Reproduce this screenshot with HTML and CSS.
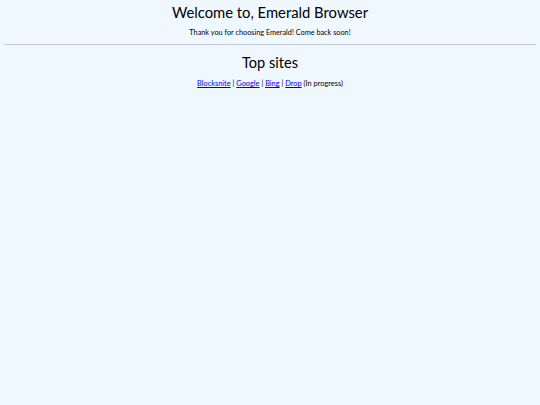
FILE: index.html
```html
<!DOCTYPE html>
<html>
<head>
<meta charset="utf-8">
<link rel="stylesheet" href="styles.css">
</head>
<body>
<header class="intro">
<h1 class="title">Welcome to, Emerald Browser</h1>
<p class="tagline">Thank you for choosing Emerald! Come back soon!</p>
</header>
<hr class="rule">
<section class="sites">
<h2 class="sites-title">Top sites</h2>
<p class="links"><a href="#">Blocksnite</a> | <a href="#">Google</a> | <a href="#">Bing</a> | <a href="#">Drop</a> (In progress)</p>
</section>
</body>
</html>
```
FILE: styles.css
```css
html, body {
  background: #f0f8ff;
}
body {
  margin: 4px;
  font-family: Lato, "Open Sans", sans-serif;
  color: #000;
  text-align: center;
}
.title {
  font-size: 14.8px;
  font-weight: 400;
  margin: 0;
  line-height: 16px;
}
.tagline {
  font-size: 7.3px;
  margin: 8px 0 0;
  line-height: 10px;
}
.rule {
  margin: 6px 0 0;
  border: 0;
  border-top: 1px solid #c4c8d4;
  height: 0;
}
.sites-title {
  font-size: 14.6px;
  font-weight: 400;
  margin: 10px 0 0;
  line-height: 16px;
}
.links {
  font-size: 7.4px;
  margin: 8px 0 0;
  line-height: 10px;
}
.links a {
  color: #0000ee;
}
```
